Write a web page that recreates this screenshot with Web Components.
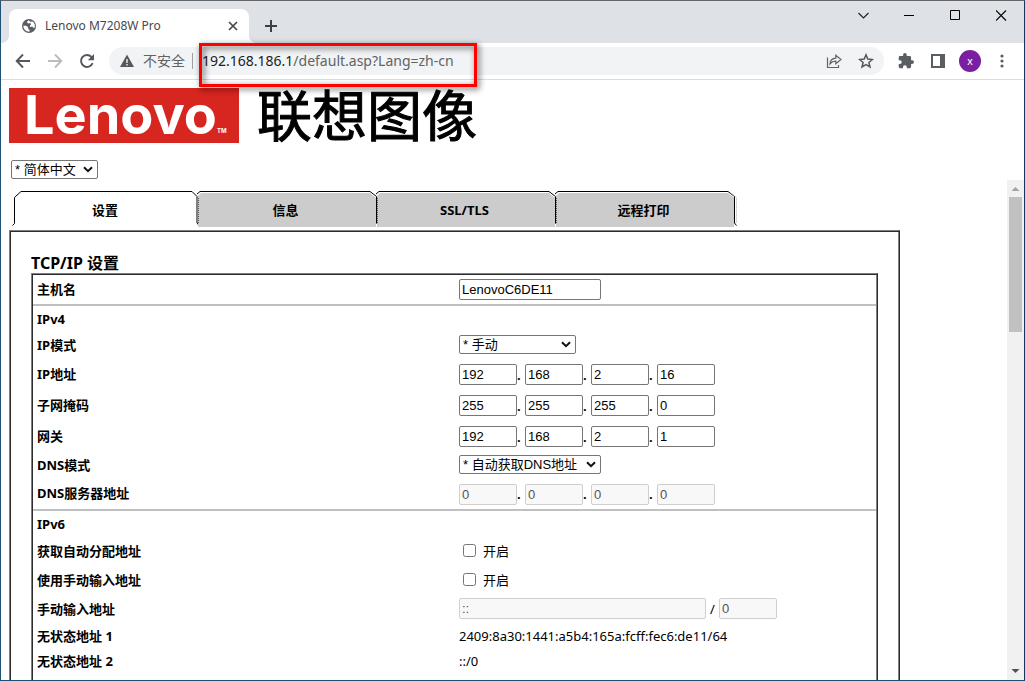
<!DOCTYPE html>
<html lang="zh-CN">
<head>
<meta charset="utf-8">
<title>Lenovo M7208W Pro</title>
<style>
  html, body { margin: 0; height: 100%; overflow: hidden; }
  body { font-family: "Noto Sans", "Noto Sans CJK SC", sans-serif; font-size: 13px; color: #000; }
</style>
</head>
<body>
<browser-window>
  <tab-strip slot="tabs" title="Lenovo M7208W Pro"></tab-strip>
  <nav-bar slot="toolbar" host="192.168.186.1" path="/default.asp?Lang=zh-cn"></nav-bar>
  <brand-header></brand-header>
  <scroll-frame>
    <tab-list>
      <page-tab active>设置</page-tab>
      <page-tab>信息</page-tab>
      <page-tab>SSL/TLS</page-tab>
      <page-tab last>远程打印</page-tab>
    </tab-list>
    <settings-panel heading="TCP/IP 设置">
      <setting-row type="text" label="主机名" value="LenovoC6DE11"></setting-row>
      <setting-row type="title" label="IPv4" divided></setting-row>
      <setting-row type="select" label="IP模式" value="* 手动"></setting-row>
      <setting-row type="ip" label="IP地址" value="192.168.2.16"></setting-row>
      <setting-row type="ip" label="子网掩码" value="255.255.255.0"></setting-row>
      <setting-row type="ip" label="网关" value="192.168.2.1"></setting-row>
      <setting-row type="select" label="DNS模式" value="* 自动获取DNS地址" wide></setting-row>
      <setting-row type="ip" label="DNS服务器地址" value="0.0.0.0" disabled></setting-row>
      <setting-row type="title" label="IPv6" divided></setting-row>
      <setting-row type="check" label="获取自动分配地址" value="开启"></setting-row>
      <setting-row type="check" label="使用手动输入地址" value="开启"></setting-row>
      <setting-row type="prefix" label="手动输入地址" value="::/0" disabled></setting-row>
      <setting-row type="value" label="无状态地址 1" value="2409:8a30:1441:a5b4:165a:fcff:fec6:de11/64"></setting-row>
      <setting-row type="value" label="无状态地址 2" value="::/0"></setting-row>
    </settings-panel>
  </scroll-frame>
</browser-window>

<script>
class Base extends HTMLElement {
  connectedCallback() {
    if (this.shadowRoot) return;
    this.attachShadow({ mode: "open" }).innerHTML = this.render();
  }
  attr(name) { return this.getAttribute(name) || ""; }
}

customElements.define("browser-window", class extends Base {
  render() {
    return `
    <style>
      :host { display: flex; flex-direction: column; box-sizing: border-box; height: 100vh; background: #fff;
        border: 1px solid #1c5272; border-top-color: #66676a; border-right-color: #17365f; overflow: hidden; }
      main { flex: 1; min-height: 0; display: flex; flex-direction: column; }
    </style>
    <slot name="tabs"></slot>
    <slot name="toolbar"></slot>
    <main><slot></slot></main>`;
  }
});

customElements.define("tab-strip", class extends Base {
  render() {
    return `
    <style>
      :host { display: flex; align-items: stretch; height: 42px; background: #dee1e6; flex: none; }
      .tab { display: flex; align-items: center; gap: 8px; box-sizing: border-box; width: 240px; height: 34px;
        margin: 8px 0 0 8px; padding: 0 9px 0 12px; background: #fff; border-radius: 8px 8px 0 0; position: relative; }
      .tab::before, .tab::after { content: ""; position: absolute; bottom: 0; width: 8px; height: 8px; }
      .tab::before { left: -8px; background: radial-gradient(circle at 0 0, transparent 8px, #fff 8px); }
      .tab::after { right: -8px; background: radial-gradient(circle at 100% 0, transparent 8px, #fff 8px); }
      .title { flex: 1; font-size: 12px; line-height: 16px; color: #45494d; white-space: nowrap; }
      button { border: 0; padding: 0; background: none; display: grid; place-items: center; }
      .close { width: 14px; height: 16px; }
      .add { width: 28px; height: 28px; margin: 11px 0 0 8px; }
      .controls { display: flex; margin-left: auto; height: 28px; }
      .controls button { width: 46px; }
      svg { display: block; }
    </style>
    <div class="tab">
      <svg width="16" height="16" viewBox="0 0 16 16"><circle cx="8" cy="8" r="7" fill="#5a5e63"/><path d="M2.3 7.8h2.900l2 1.500v1.600l1.600 1.200-.6 1.700a5.900 5.900 0 0 1-5.900-6zM7.600 2.300l-1.800 1.800 1.300 1.400 2.100-.4.900 1.300-1.200 1.200.2 1.400 2.200-.4 1 1.200 1.200.3a6 6 0 0 0-2.800-7.200l-.5 1.300z" fill="#fff"/></svg>
      <span class="title">${this.attr("title")}</span>
      <button class="close" aria-label="关闭标签页"><svg width="10" height="10" viewBox="0 0 10 10"><path d="M1 1l8 8M9 1l-8 8" stroke="#45494d" stroke-width="1.700"/></svg></button>
    </div>
    <button class="add" aria-label="新标签页"><svg width="12" height="12" viewBox="0 0 12 12"><path d="M6 0v12M0 6h12" stroke="#3c4043" stroke-width="2"/></svg></button>
    <div class="controls">
      <button aria-label="搜索标签页"><svg width="11" height="11" viewBox="0 0 11 11"><path d="M.5 3l5 5 5-5" fill="none" stroke="#222" stroke-width="1.200"/></svg></button>
      <button aria-label="最小化"><svg width="11" height="11" viewBox="0 0 11 11"><path d="M0 5.500h10" stroke="#000"/></svg></button>
      <button aria-label="最大化"><svg width="11" height="11" viewBox="0 0 11 11"><path d="M.5 .5h9v9h-9z" fill="none" stroke="#000"/></svg></button>
      <button aria-label="关闭"><svg width="11" height="11" viewBox="0 0 11 11"><path d="M0 .5l10 10M10 .5l-10 10" stroke="#000" stroke-width="1.100"/></svg></button>
    </div>`;
  }
});

customElements.define("nav-bar", class extends Base {
  render() {
    return `
    <style>
      :host { display: flex; align-items: center; height: 36px; background: #fff; border-bottom: 1px solid #dadce0; flex: none; padding-left: 6px; }
      button { width: 32px; height: 28px; border: 0; padding: 0; background: none; display: grid; place-items: center; }
      svg { display: block; }
      .box { flex: 1; position: relative; display: flex; align-items: center; height: 28px; border-radius: 14px;
        background: #f1f3f4; margin: 0 6px 0 6px; padding: 0 2px 0 11px; font-size: 14px; line-height: 20px; color: #5f6368; white-space: nowrap; }
      .warn { margin-right: 9px; }
      .bar { width: 1px; height: 16px; background: #9aa0a6; margin: 0 9px 0 7px; }
      .url { flex: 1; color: #5f6368; text-decoration: none; }
      .url b { font-weight: 400; color: #202124; }
      .mark { position: absolute; left: 90px; top: -4px; width: 272px; height: 38px; border: 3px solid #fe0000;
        filter: drop-shadow(2px 2px 3px rgba(0,0,0,.7)); z-index: 2; pointer-events: none; }
      .avatar { width: 22px; height: 22px; border-radius: 50%; background: #7b1fa2; color: #fff; font-size: 11px; line-height: 22px; text-align: center; }
    </style>
    <button aria-label="后退"><svg width="16" height="16" viewBox="0 0 16 16"><path d="M15 8H2M8 1.500L1.700 8 8 14.500" fill="none" stroke="#54585d" stroke-width="1.900"/></svg></button>
    <button aria-label="前进"><svg width="16" height="16" viewBox="0 0 16 16"><path d="M1 8h13M8 1.500L14.300 8 8 14.500" fill="none" stroke="#babcbe" stroke-width="1.900"/></svg></button>
    <button aria-label="重新加载"><svg width="16" height="16" viewBox="0 0 16 16"><path d="M13.600 10.200A6 6 0 1 1 12.400 3.800L14 5.500" fill="none" stroke="#54585d" stroke-width="1.900"/><path d="M15 1v6.200H8.800z" fill="#54585d"/></svg></button>
    <div class="box">
      <svg class="warn" width="14" height="14" viewBox="0 0 14 14"><path d="M7 0.500L14 13H0z" fill="#54585d"/><path d="M7 5v4M7 10v1.500" stroke="#f1f3f4" stroke-width="1.400"/></svg>
      <span>不安全</span><span class="bar"></span>
      <a class="url" href="#"><b>${this.attr("host")}</b>${this.attr("path")}</a>
      <button aria-label="分享"><svg width="16" height="16" viewBox="0 0 16 16"><path d="M1.500 4.500v10h11V12" fill="none" stroke="#5f6368" stroke-width="1.200"/><path d="M4 11C4.200 7.500 6.200 5.500 9.800 5.200V2.200L15 6.500 9.800 10.700V8C7.300 8 5.500 9 4 11z" fill="none" stroke="#5f6368" stroke-width="1.200"/></svg></button>
      <button aria-label="收藏"><svg width="16" height="16" viewBox="0 0 16 16"><path d="M8 1.900l1.800 4.200 4.600.4-3.500 3 1.100 4.500L8 11.600 4 14l1.100-4.500-3.500-3 4.600-.4z" fill="none" stroke="#54585d" stroke-width="1.500"/></svg></button>
      <span class="mark"></span>
    </div>
    <button aria-label="扩展程序"><svg width="16" height="16" viewBox="1 1 22 22"><path d="M20.500 11H19V7a2 2 0 0 0-2-2h-4V3.500a2.500 2.500 0 0 0-5 0V5H4a2 2 0 0 0-2 2v3.800h1.500a2.700 2.700 0 0 1 0 5.400H2V20a2 2 0 0 0 2 2h3.800v-1.500a2.700 2.700 0 0 1 5.400 0V22H17a2 2 0 0 0 2-2v-4h1.500a2.500 2.500 0 0 0 0-5z" fill="#5a5e63"/></svg></button>
    <button aria-label="侧边栏"><svg width="14" height="14" viewBox="0 0 14 14"><path d="M0 0h14v14H0zM2 2v10h7V2z" fill="#5a5e63" fill-rule="evenodd"/></svg></button>
    <button aria-label="用户"><span class="avatar">x</span></button>
    <button aria-label="菜单"><svg width="4" height="14" viewBox="0 0 4 14"><g fill="#5a5e63"><circle cx="2" cy="2" r="1.600"/><circle cx="2" cy="7" r="1.600"/><circle cx="2" cy="12" r="1.600"/></g></svg></button>
    <span style="width:6px"></span>`;
  }
});

const FIELD_CSS = `
  .pick { display: inline-grid; align-items: center; }
  .pick > * { grid-area: 1 / 1; }
  .pick svg { justify-self: end; margin-right: 5px; pointer-events: none; }
  select { appearance: none; box-sizing: border-box; width: 100%; height: 19px; margin: 0; padding: 0 3px; border: 1px solid #767676; border-radius: 2px;
    background: #fff; color: #000; font: 13px/17px "Liberation Sans", "Noto Sans CJK SC", sans-serif; }`;
const CHEVRON = `<svg width="10" height="7" viewBox="0 0 10 7"><path d="M1 1.200l4 4 4-4" fill="none" stroke="#111" stroke-width="2"/></svg>`;

customElements.define("brand-header", class extends Base {
  render() {
    return `
    <style>
      :host { display: block; height: 92px; padding: 8px 8px 0; flex: none; }
      .brand { display: flex; align-items: flex-start; height: 55px; gap: 18px; }
      .logo { display: flex; box-sizing: border-box; width: 230px; height: 55px; padding-left: 15px; background: #d7251f; color: #fff;
        font: 700 54px/54px Inter, sans-serif; }
      .logo small { font-size: 6px; line-height: 8px; align-self: flex-end; margin-bottom: 8px; }
      h1 { margin: 0; font: 400 55px/49px "Noto Sans CJK SC", sans-serif; -webkit-text-stroke: 1px #000; }
      .pick { width: 87px; margin: 17px 0 0 2px; }
      ${FIELD_CSS}
    </style>
    <div class="brand"><div class="logo"><span>Lenovo</span><small>TM</small></div><h1>联想图像</h1></div>
    <div class="pick"><select aria-label="语言"><option>* 简体中文</option></select>${CHEVRON}</div>`;
  }
});

customElements.define("scroll-frame", class extends Base {
  render() {
    return `
    <style>
      :host { flex: 1; min-height: 0; display: flex; }
      .view { flex: 1; min-width: 0; overflow: hidden; padding: 11px 8px 0; }
      .rail { width: 17px; flex: none; background: #f1f1f1; display: flex; flex-direction: column; align-items: center; }
      .rail svg { display: block; flex: none; }
      .thumb { width: 13px; height: 27%; background: #c1c1c1; }
      .gap { flex: 1; }
    </style>
    <div class="view"><slot></slot></div>
    <div class="rail">
      <svg width="17" height="17" viewBox="0 0 17 17"><path d="M4.500 11h8l-4-4z" fill="#a3a3a3"/></svg>
      <div class="thumb"></div><div class="gap"></div>
      <svg width="17" height="17" viewBox="0 0 17 17"><path d="M4.500 6h8l-4 4z" fill="#505050"/></svg>
    </div>`;
  }
});

customElements.define("tab-list", class extends Base {
  render() {
    return `<style>:host { display: flex; height: 39px; margin-left: 3px; }</style><slot></slot>`;
  }
});

customElements.define("page-tab", class extends Base {
  render() {
    const active = this.hasAttribute("active");
    const art = active
      ? `<path d="M.5 34.500l2-2V6.500L9 .5H180l5 5V32l2 2.500" fill="none" stroke="#000"/>`
      : `<path d="M0 5l3-3H172l6 5V36H0z" fill="#ccc"/><path d="M-1 3l3-2.500H172l6.500 5V32l2 2.500" fill="none" stroke="#000"/>
         <path d="M.5 7V32" stroke="#555" stroke-dasharray="1 1"/>
         ${this.hasAttribute("last") ? `<path d="M174 1.500l6.500 5V32" fill="none" stroke="#aaa" stroke-dasharray="1 1"/>` : ""}`;
    return `
    <style>
      :host { display: block; width: ${active ? 186 : 179}px; }
      a { display: grid; height: 36px; color: #000; text-decoration: none; font-weight: 700; font-size: 13px; }
      a > * { grid-area: 1 / 1; }
      span { place-self: center; padding-top: 1px; padding-right: 4px; line-height: 18px; }
      :host([active]) span { padding-right: 0; }
      svg { width: 100%; height: 36px; overflow: visible; }
    </style>
    <a href="#"><svg aria-hidden="true">${art}</svg><span><slot></slot></span></a>`;
  }
});

customElements.define("settings-panel", class extends Base {
  render() {
    return `
    <style>
      :host { display: block; box-sizing: border-box; max-width: 891px; padding: 22px 21px 40px;
        border: 1px solid #808080; border-right-color: #2c2c2c; box-shadow: inset 1px 1px #2c2c2c, inset -1px 0 #808080; }
      h2 { margin: 0; font-size: 16px; line-height: 20px; height: 20px; font-weight: 700; }
      form { border: 1px solid #808080; border-right-color: #2c2c2c; box-shadow: inset 1px 1px #2c2c2c, inset -1px 0 #808080; padding: 1px 1px 25px; }
    </style>
    <h2>${this.attr("heading")}</h2>
    <form><slot></slot></form>`;
  }
});

customElements.define("setting-row", class extends Base {
  render() {
    const type = this.attr("type"), label = this.attr("label"), value = this.attr("value");
    const off = this.hasAttribute("disabled") ? "disabled" : "";
    const octet = (v, i) => `<input class="num" aria-label="${label} ${i + 1}" value="${v}" ${off}>`;
    const heights = { text: 29, title: 26, select: 27, ip: off ? 30 : 31, check: 29, prefix: 29, value: 25 };
    const body = {
      text: () => `<input id="f" class="name" value="${value}">`,
      title: () => "",
      select: () => `<span class="pick"><select id="f"><option>${value}</option></select>${CHEVRON}</span>`,
      ip: () => value.split(".").map(octet).join(`<span class="dot">.</span>`),
      check: () => `<input type="checkbox" id="f"><label for="f" class="on">${value}</label>`,
      prefix: () => { const [a, n] = value.split("/"); return `<input id="f" class="addr" value="${a}" ${off}><span class="slash">/</span>${octet(n, 1)}`; },
      value: () => `<span class="plain">${value}</span>`
    }[type]();
    const bound = ["text", "select", "prefix"].includes(type);
    const name = bound ? `<label class="key" for="f">${label}</label>` : `<span class="key" id="k">${label}</span>`;
    return `
    <style>
      :host { display: block; }
      :host([divided]) { border-top: 2px solid #c0c0c0; }
      .row { display: grid; grid-template-columns: 1fr 1fr; column-gap: 5px; align-items: center; height: ${heights[type]}px; padding-left: 4px; line-height: 18px; }
      .key, .on, .plain { padding-bottom: 2px; }
      .key { font-weight: 700; }
      .cell { display: flex; align-items: center; }
      :host([type=select]) .cell, :host([type=prefix]) .cell { padding-bottom: 2px; }
      :host([type=title]) .key { padding-bottom: 0; }
      input:not([type]) { box-sizing: border-box; height: 21px; margin: 0; padding: 1px 2px; border: 1px solid #767676; border-radius: 2px; background: #fff;
        color: #000; font: 13px/17px "Liberation Sans", sans-serif; }
      input:not([type]):disabled { background: #f8f8f8; border-color: #cfcfcf; color: #545454; }
      .name { width: 142px; } .num { width: 58px; } .addr { width: 247px; }
      .dot { width: 8px; font-weight: 700; } .slash { width: 13px; text-align: center; }
      input[type=checkbox] { width: 13px; height: 13px; margin: 0 7px 2px 4px; }
      .pick { width: 117px; }
      :host([wide]) .pick { width: 142px; }
      ${FIELD_CSS}
    </style>
    <div class="row" ${type === "ip" ? `role="group" aria-labelledby="k"` : ""}>${name}<div class="cell">${body}</div></div>`;
  }
});
</script>
</body>
</html>
